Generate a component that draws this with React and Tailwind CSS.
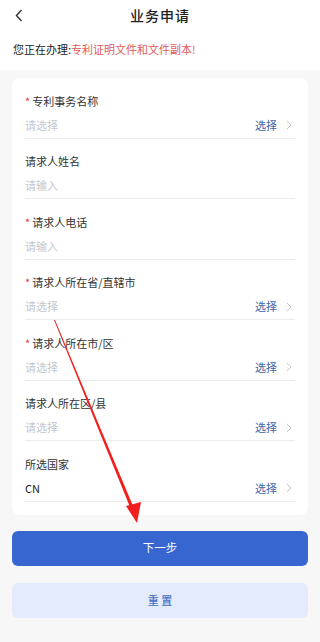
import React from 'react'

const rows = [
  { label: '专利事务名称', required: true, value: '请选择', select: true },
  { label: '请求人姓名', required: false, value: '请输入' },
  { label: '请求人电话', required: true, value: '请输入' },
  { label: '请求人所在省/直辖市', required: true, value: '请选择', select: true },
  { label: '请求人所在市/区', required: true, value: '请选择', select: true },
  { label: '请求人所在区/县', required: false, value: '请选择', select: true },
  { label: '所选国家', required: false, value: 'CN', filled: true, select: true },
]

function Chevron({ className }) {
  return (
    <svg width="6" height="10" viewBox="0 0 6 10" className={className}>
      <path d="M1 1l4 4-4 4" fill="none" stroke="currentColor" strokeWidth="1" />
    </svg>
  )
}

export default function App() {
  return (
    <div
      className="relative h-[642px] overflow-hidden bg-[#f7f7f8]"
      style={{ fontFamily: '"Noto Sans CJK SC", "Noto Sans", sans-serif' }}
    >
      {/* Header */}
      <div className="bg-white">
        <div className="relative flex h-[31px] items-center justify-center">
          <svg width="8" height="13" viewBox="0 0 8 13" className="absolute left-[15px] top-[9px] text-[#333]">
            <path d="M6.5 1L1.5 6.5l5 5.5" fill="none" stroke="currentColor" strokeWidth="1.4" />
          </svg>
          <span className="text-[14px] font-medium text-[#222] tracking-[1px]">业务申请</span>
        </div>
        <div className="flex h-[39px] items-center px-[13px] pb-[3px] text-[11px] leading-none">
          <span className="text-[#222]">您正在办理:</span>
          <span className="text-[#e05a5a]">专利证明文件和文件副本!</span>
        </div>
      </div>

      {/* Form card */}
      <div className="mx-3 mt-2 rounded-lg bg-white px-[13px] pb-[13px]">
        {rows.map((r, i) => (
          <div key={i} className="border-b border-[#ececec] pb-[4.5px] pt-[15px]">
            <div className="flex h-4 items-center text-[11px] text-[#333]">
              {r.required && <span className="mr-[2px] text-[#e03a3a]">*</span>}
              <span>{r.label}</span>
            </div>
            <div className="mt-2 flex h-4 items-center justify-between text-[11px]">
              <span className={r.filled ? 'text-[#222]' : 'text-[#c4c8cf]'}>{r.value}</span>
              {r.select && (
                <span className="flex items-center gap-[9px] pr-[3px]">
                  <span className="text-[#3d64a8]">选择</span>
                  <Chevron className="text-[#c8c8c8]" />
                </span>
              )}
            </div>
          </div>
        ))}
      </div>

      {/* Buttons */}
      <div className="mx-3 mt-4 flex flex-col gap-[17px]">
        <button className="flex h-[35px] items-center justify-center rounded-md bg-[#3766d0] text-[11.5px] text-white">
          下一步
        </button>
        <button className="flex h-[35px] items-center justify-center rounded-md bg-[#e3ebfc] text-[11px] font-medium text-[#4a6fc0]">
          重 置
        </button>
      </div>

      <div className="mx-auto mt-[24px] h-[4px] w-[122px] rounded-full bg-[#bdbdbd]" />

      {/* Annotation arrow */}
      <svg className="pointer-events-none absolute left-0 top-0" width="306" height="642" viewBox="0 0 306 642">
        <polygon points="54,320 55,320 133,506 130,507" fill="#f21d1d" />
        <polygon points="126,506 141,502 137,523" fill="#f21d1d" />
      </svg>
    </div>
  )
}
